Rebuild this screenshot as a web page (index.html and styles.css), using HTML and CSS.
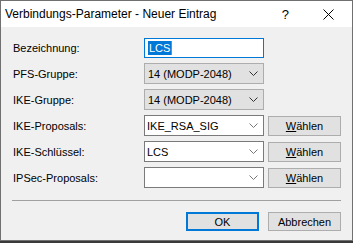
FILE: index.html
```html
<!doctype html>
<html lang="de">
	<head>
		<meta charset="UTF-8">
		<title>Verbindungs-Parameter - Neuer Eintrag</title>
		<link rel="stylesheet" href="styles.css">
	</head>
	<body>
		<div class="dlg">
			<div class="titlebar">
				<span class="title">Verbindungs-Parameter - Neuer Eintrag</span>
				<span class="help">?</span>
				<svg class="close" width="11" height="11" viewBox="0 0 11 11"><path d="M0.5 0.5L10.5 10.5M10.5 0.5L0.5 10.5" stroke="#000" stroke-width="1"/></svg>
			</div>
			<div class="content">
				<div class="form">
					<label>Bezeichnung:</label>
					<div class="edit focus"><span class="sel">LCS</span><span class="caret"></span></div>
					<div></div>

					<label>PFS-Gruppe:</label>
					<div class="drop"><span>14 (MODP-2048)</span><svg class="arrow" width="9" height="5" viewBox="0 0 9 5"><path d="M0.5 0.5L4.5 4.5L8.5 0.5" fill="none" stroke="#333" stroke-width="1"/></svg></div>
					<div></div>

					<label>IKE-Gruppe:</label>
					<div class="drop"><span>14 (MODP-2048)</span><svg class="arrow" width="9" height="5" viewBox="0 0 9 5"><path d="M0.5 0.5L4.5 4.5L8.5 0.5" fill="none" stroke="#333" stroke-width="1"/></svg></div>
					<div></div>

					<label>IKE-Proposals:</label>
					<div class="combo"><span>IKE_RSA_SIG</span><svg class="arrow" width="9" height="5" viewBox="0 0 9 5"><path d="M0.5 0.5L4.5 4.5L8.5 0.5" fill="none" stroke="#777" stroke-width="1"/></svg></div>
					<div class="btn pick"><u>W</u>ählen</div>

					<label>IKE-Schlüssel:</label>
					<div class="combo"><span>LCS</span><svg class="arrow" width="9" height="5" viewBox="0 0 9 5"><path d="M0.5 0.5L4.5 4.5L8.5 0.5" fill="none" stroke="#777" stroke-width="1"/></svg></div>
					<div class="btn pick"><u>W</u>ählen</div>

					<label>IPSec-Proposals:</label>
					<div class="combo"><span></span><svg class="arrow" width="9" height="5" viewBox="0 0 9 5"><path d="M0.5 0.5L4.5 4.5L8.5 0.5" fill="none" stroke="#777" stroke-width="1"/></svg></div>
					<div class="btn pick"><u>W</u>ählen</div>
				</div>
				<div class="sep"></div>
				<div class="actions">
					<div class="btn ok">OK</div>
					<div class="btn">Abbrechen</div>
				</div>
			</div>
		</div>
	</body>
</html>
```
FILE: styles.css
```css
html, body{
	margin: 0;
	padding: 0;
}
body{
	width: 353px;
	height: 243px;
	background-color: #3a3a3a;
	font-family: "Liberation Sans", Arial, sans-serif;
	font-size: 11px;
	color: #000;
	overflow: hidden;
}
.dlg{
	width: 351px;
	height: 239px;
	border: 1px solid #707070;
	background-color: #f0f0f0;
	display: flex;
	flex-direction: column;
}
.titlebar{
	height: 26px;
	background-color: #fff;
	display: flex;
	align-items: center;
	padding-left: 4px;
}
.title{
	font-size: 12px;
	flex: 1;
}
.help{
	font-size: 13px;
	margin-right: 34px;
}
.close{
	margin-right: 18px;
}
.content{
	padding: 10px 11px 0 11px;
}
.form{
	display: grid;
	grid-template-columns: 128px 120px 73px;
	grid-auto-rows: 21px;
	row-gap: 5px;
	column-gap: 4px;
	align-items: center;
}
.form label{
	padding-left: 1px;
}
.edit, .drop, .combo{
	box-sizing: border-box;
	height: 21px;
	display: flex;
	align-items: center;
	padding-left: 3px;
}
.edit{
	height: 20px;
	background-color: #fff;
	border: 1px solid #0078d7;
}
.sel{
	background-color: #0078d7;
	color: #fff;
	padding: 1px 1px;
	font-size: 11px;
}
.caret{
	width: 1px;
	height: 14px;
	background-color: #e07020;
}
.drop{
	background-color: #e1e1e1;
	border: 1px solid #adadad;
}
.combo{
	background-color: #fff;
	border: 1px solid #7a7a7a;
	padding-left: 2px;
}
.drop span, .combo span{
	flex: 1;
}
.arrow{
	margin-right: 5px;
}
.btn{
	box-sizing: border-box;
	height: 19px;
	background-color: #e1e1e1;
	border: 1px solid #adadad;
	display: flex;
	align-items: center;
	justify-content: center;
	width: 73px;
}
.pick{
	height: 20px;
}
.sep{
	margin-top: 12px;
	height: 1px;
	width: 329px;
	background-color: #a0a0a0;
}
.actions{
	display: flex;
	justify-content: flex-end;
	gap: 9px;
	margin-top: 11px;
	width: 329px;
}
.ok{
	border: 2px solid #0078d7;
}
```
